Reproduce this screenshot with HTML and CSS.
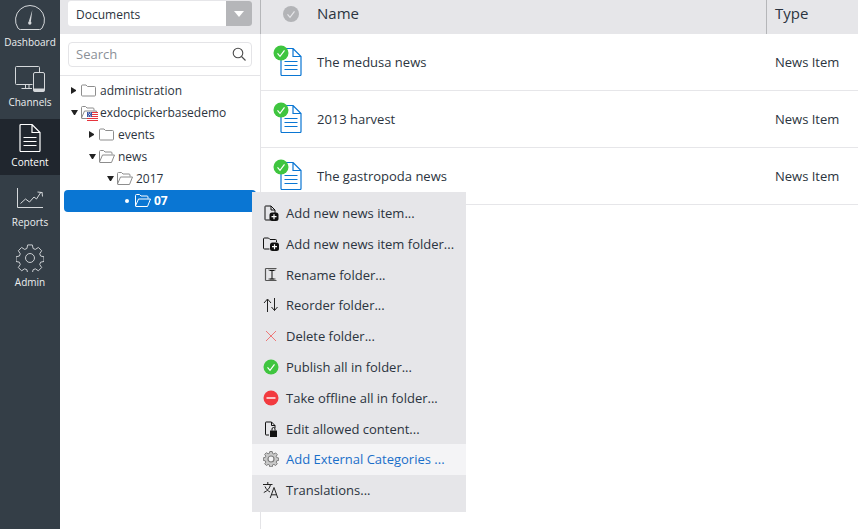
FILE: index.html
```html
<!DOCTYPE html>
<html>
<head>
<meta charset="UTF-8">
<title>Content</title>
<link rel="stylesheet" href="styles.css">
</head>
<body>
<svg class="defs" width="0" height="0">
  <symbol id="folder" viewBox="0 0 15 13"><path d="M.5 2a1 1 0 0 1 1-1h3.500l1.500 1.500h7a1 1 0 0 1 1 1v7.500a1 1 0 0 1-1 1h-12a1 1 0 0 1-1-1z" fill="none" stroke="currentColor"/></symbol>
  <symbol id="folder-open" viewBox="0 0 16 13"><path d="M.5 12V1.500a1 1 0 0 1 1-1h3l1.500 1.500h6a1 1 0 0 1 1 1v1.500M.5 12l3-7h12l-3 7.500H1a.5.500 0 0 1-.5-.5z" fill="none" stroke="currentColor"/></symbol>
  <symbol id="doc" viewBox="0 0 22 28"><path d="M1 1.500a1 1 0 0 1 1-1h11l8 8v18a1 1 0 0 1-1 1H2a1 1 0 0 1-1-1zM13 .5v8h8M4.500 13.500h13M4.500 17.500h13M4.500 21.500h13" fill="none" stroke="#0a76d3" stroke-width="1.200"/></symbol>
  <symbol id="check" viewBox="0 0 16 16"><circle cx="8" cy="8" r="7.500" fill="#3fc53f"/><path d="M4.500 8.300l2.500 3 4.500-6" fill="none" stroke="#fff" stroke-width="1.200"/></symbol>
</svg>
<div class="app">
  <nav class="sidebar">
    <a class="nav-item">
      <span class="nav-icon"><svg width="30" height="32" viewBox="0 0 30 32"><path d="M5.500 26.500h19a3 3 0 0 0 2.600-1.500 14.500 14.500 0 1 0-24.200 0 3 3 0 0 0 2.600 1.500z" fill="none" stroke="#d5d8db"/><path d="M13.800 18.500L17.300 7l-1.500 12z" fill="#d5d8db"/><circle cx="14.800" cy="20" r="1.700" fill="#d5d8db"/></svg></span>
      <span>Dashboard</span>
    </a>
    <a class="nav-item">
      <span class="nav-icon"><svg width="30" height="28" viewBox="0 -2 30 28"><path d="M17.500 18.500H1.500a1 1 0 0 1-1-1v-16a1 1 0 0 1 1-1h22a1 1 0 0 1 1 1v5M10.500 18.500v4M14 18.500v4M6.500 22.500H17" fill="none" stroke="#d5d8db"/><rect x="18.500" y="6.500" width="11" height="19" rx="1.500" fill="#343e47" stroke="#d5d8db"/><rect x="18.500" y="22.500" width="11" height="3" fill="#d5d8db"/></svg></span>
      <span>Channels</span>
    </a>
    <a class="nav-item active">
      <span class="nav-icon"><svg width="22" height="28" viewBox="0 0 22 28"><path d="M1 1.500a1 1 0 0 1 1-1h11l8 8v18a1 1 0 0 1-1 1H2a1 1 0 0 1-1-1zM13 .5v8h8M4.500 13.500h13M4.500 17.500h13M4.500 21.500h13" fill="none" stroke="#fff" stroke-width="1.200"/></svg></span>
      <span>Content</span>
    </a>
    <a class="nav-item">
      <span class="nav-icon"><svg width="26" height="20" viewBox="0 0 26 20"><path d="M.5 0v19.500H26M3.500 15.500l5-4.500 4 3 4.500-5 2.500 2 4.500-7M25 4.500l-4.500-.5M25 4l.5 4.500" fill="none" stroke="#d5d8db"/></svg></span>
      <span>Reports</span>
    </a>
    <a class="nav-item">
      <span class="nav-icon"><svg width="28" height="28" viewBox="0 0 30 30"><path d="M12.500 1h5l.8 3.800 2.400 1 3.300-2.100 3.500 3.500-2.100 3.300 1 2.400 3.600.8v5l-3.600.8-1 2.400 2.100 3.300-3.500 3.500-3.300-2.100-2.400 1-.8 3.600h-5l-.8-3.600-2.400-1-3.300 2.100-3.500-3.500 2.100-3.300-1-2.400-3.600-.8v-5l3.600-.8 1-2.400-2.100-3.300 3.500-3.500 3.300 2.100 2.400-1z" fill="none" stroke="#d5d8db"/><circle cx="15" cy="15" r="4.800" fill="none" stroke="#d5d8db"/></svg></span>
      <span>Admin</span>
    </a>
  </nav>

  <aside class="panel">
    <div class="panel-top">
      <div class="select">
        <span class="select-label">Documents</span>
        <span class="select-arrow"></span>
      </div>
    </div>
    <div class="search-wrap">
      <div class="search">
        <span>Search</span>
        <svg width="14" height="14" viewBox="0 0 14 14"><circle cx="6" cy="6" r="4.800" fill="none" stroke="#4a4a4a" stroke-width="1.100"/><path d="M9.500 9.500l4 4" stroke="#4a4a4a" stroke-width="1.100"/></svg>
      </div>
    </div>
    <ul class="tree">
      <li class="level-0"><i class="arrow right"></i><svg class="folder"><use href="#folder"/></svg><span>administration</span></li>
      <li class="level-0"><i class="arrow down"></i><span class="flagged"><svg class="folder-o"><use href="#folder-open"/></svg>
        <svg class="flag" width="11" height="9" viewBox="0 0 11 9"><rect width="11" height="9" fill="#fff"/><path d="M0 .5h11M0 2.500h11M0 4.500h11M0 6.500h11M0 8.500h11" stroke="#e6343c"/><rect width="5" height="5" fill="#3d5aa8"/><path d="M1 1h1M3 1h1M2 2.500h1M1 4h1M3 4h1" stroke="#fff" stroke-width=".8"/></svg></span><span>exdocpickerbasedemo</span></li>
      <li class="level-1"><i class="arrow right"></i><svg class="folder"><use href="#folder"/></svg><span>events</span></li>
      <li class="level-1"><i class="arrow down"></i><svg class="folder-o"><use href="#folder-open"/></svg><span>news</span></li>
      <li class="level-2"><i class="arrow down"></i><svg class="folder-o"><use href="#folder-open"/></svg><span>2017</span></li>
      <li class="level-3 selected"><i class="dot"></i><svg class="folder-o"><use href="#folder-open"/></svg><span>07</span></li>
    </ul>
  </aside>

  <main class="content">
    <div class="list-head">
      <div class="col-check"><svg width="16" height="16" viewBox="0 0 16 16"><circle cx="8" cy="8" r="8" fill="#b3b4b7"/><path d="M4.500 8.300l2.500 3 4.500-6" fill="none" stroke="#e6e6e9" stroke-width="1.200"/></svg></div>
      <div class="col-name">Name</div>
      <div class="col-type">Type</div>
    </div>
    <div class="row">
      <div class="col-check"><span class="doc-icon"><svg class="doc" width="22" height="28"><use href="#doc"/></svg><svg class="pub" width="16" height="16"><use href="#check"/></svg></span></div>
      <div class="col-name">The medusa news</div>
      <div class="col-type">News Item</div>
    </div>
    <div class="row">
      <div class="col-check"><span class="doc-icon"><svg class="doc" width="22" height="28"><use href="#doc"/></svg><svg class="pub" width="16" height="16"><use href="#check"/></svg></span></div>
      <div class="col-name">2013 harvest</div>
      <div class="col-type">News Item</div>
    </div>
    <div class="row">
      <div class="col-check"><span class="doc-icon"><svg class="doc" width="22" height="28"><use href="#doc"/></svg><svg class="pub" width="16" height="16"><use href="#check"/></svg></span></div>
      <div class="col-name">The gastropoda news</div>
      <div class="col-type">News Item</div>
    </div>
  </main>

  <ul class="menu">
    <li><svg width="16" height="16" viewBox="0 0 16 16"><path d="M7 15H2.500a.5.500 0 0 1-.5-.5v-13a.5.500 0 0 1 .5-.5H8l4 4v3M8 1v4h4" fill="none" stroke="#111"/><rect x="6.500" y="7.500" width="9" height="8.500" rx="2.500" fill="#111"/><path d="M8.500 11.700h5M11 9.200v5" stroke="#fff" stroke-width="1.200"/></svg>Add new news item...</li>
    <li><svg width="16" height="16" viewBox="0 0 16 16"><path d="M6 13H1a1 1 0 0 1-1-1V3a1 1 0 0 1 1-1h4l1.500 1.500H12a1 1 0 0 1 1 1V6" fill="none" stroke="#111" transform="translate(.5)"/><rect x="7" y="6.500" width="9" height="8.500" rx="2.500" fill="#111"/><path d="M9 10.700h5M11.500 8.200v5" stroke="#fff" stroke-width="1.200"/></svg>Add new news item folder...</li>
    <li><svg width="16" height="16" viewBox="0 0 16 16"><path d="M2.500 1.500h11M2.500 13.500h11M2.500 1.500v12" fill="none" stroke="#555" stroke-width="1.200"/><path d="M5 3h8M5 12h8" stroke="#999"/><path d="M6.500 3.500h5M6.500 12h5M9 3.500V12" fill="none" stroke="#111"/></svg>Rename folder...</li>
    <li><svg width="16" height="16" viewBox="0 0 16 16"><path d="M4.500 15V2.500M1 6l3.500-4L8 6M11.500 1v12.500M8.500 10l3 3.500 3-3.500" fill="none" stroke="#222"/></svg>Reorder folder...</li>
    <li><svg width="16" height="16" viewBox="0 0 16 16"><path d="M3 3l10 10M13 3L3 13" stroke="#e77" stroke-width="1"/></svg>Delete folder...</li>
    <li><svg width="16" height="16" viewBox="0 0 16 16"><use href="#check"/></svg>Publish all in folder...</li>
    <li><svg width="16" height="16" viewBox="0 0 16 16"><circle cx="8" cy="8" r="7.500" fill="#f23a3f"/><path d="M3.500 8h9" stroke="#fff" stroke-width="1.400"/></svg>Take offline all in folder...</li>
    <li><svg width="16" height="16" viewBox="0 0 16 16"><path d="M6 14H3a.5.500 0 0 1-.5-.5v-12A.5.500 0 0 1 3 1h5.500l3.500 3.500V7M8.500 1v3.500H12" fill="none" stroke="#111"/><rect x="7" y="9.500" width="7" height="6.500" fill="#111"/><path d="M9 9.500V8a1.500 1.500 0 0 1 3 0v1.500" fill="none" stroke="#111"/></svg>Edit allowed content...</li>
    <li class="hover"><svg width="16" height="16" viewBox="0 0 16 16"><path d="M6.800.5h2.400l.4 2 1.300.5 1.700-1.100 1.700 1.700-1.100 1.700.5 1.300 2 .4v2.400l-2 .4-.5 1.300 1.100 1.700-1.700 1.700-1.700-1.100-1.300.5-.4 2H6.800l-.4-2-1.300-.5-1.700 1.100-1.700-1.700 1.100-1.700-.5-1.300-2-.4V6.800l2-.4.500-1.300-1.100-1.700 1.700-1.700 1.700 1.100 1.300-.5z" fill="#c9c9c9" stroke="#7d7d7d"/><circle cx="8" cy="8" r="3" fill="#f4f4f6" stroke="#7d7d7d" stroke-width="1.200"/></svg>Add External Categories ...</li>
    <li><svg width="16" height="16" viewBox="0 0 16 16"><path d="M0 2.500h9.500M4.800 0v2.500M7.500 2.500C7 6 4.500 9 .8 10.500M2 4.500c1 2.500 3 4.500 5 5.500M7.200 16l3.800-10.500L14.800 16M8.500 12.800h5" fill="none" stroke="#222"/></svg>Translations...</li>
  </ul>
</div>
</body>
</html>
```

FILE: styles.css
```css
* {
    box-sizing: border-box;
}
html, body {
    margin: 0;
    padding: 0;
    height: 100%;
    overflow: hidden;
}
body {
    font-family: "Open Sans", sans-serif;
    font-size: 13px;
    color: #2b3440;
    background-color: #fff;
}
ul {
    list-style: none;
    margin: 0;
    padding: 0;
}
.defs {
    position: absolute;
}
.app {
    display: flex;
    height: 529px;
    position: relative;
}

/* left nav */
.sidebar {
    width: 60px;
    flex-shrink: 0;
    background-color: #343e47;
    display: flex;
    flex-direction: column;
    gap: 4px;
}
.nav-item {
    height: 56px;
    display: flex;
    flex-direction: column;
    align-items: center;
    justify-content: flex-end;
    padding-bottom: 6px;
    color: #eceef0;
    font-size: 10px;
    font-weight: 500;
    line-height: 14px;
}
.nav-item:first-child {
    height: 55px;
}
.nav-icon {
    height: 38px;
    margin-bottom: -2px;
    display: flex;
    align-items: center;
}
.nav-item.active {
    background-color: #20262e;
    color: #fff;
}

/* folder panel */
.panel {
    width: 201px;
    flex-shrink: 0;
    border-right: 1px solid #e4e4e7;
}
.panel-top {
    height: 34px;
    margin-right: -1px;
    background-color: #e6e6e9;
    border-right: 1px solid #b5b6b9;
    padding: 1px 8px 0;
}
.select {
    height: 25px;
    background-color: #fff;
    border-radius: 3px;
    display: flex;
    justify-content: space-between;
    align-items: center;
    padding-left: 8px;
    overflow: hidden;
    font-size: 12px;
}
.select-label {
    padding-top: 2px;
}
.select-arrow {
    width: 26px;
    height: 25px;
    background-color: #b5b6b9;
    position: relative;
}
.select-arrow::after {
    content: "";
    position: absolute;
    left: 8px;
    top: 10px;
    border-left: 5.500px solid transparent;
    border-right: 5.500px solid transparent;
    border-top: 6px solid #fff;
}
.search-wrap {
    height: 42px;
    padding: 8px 8px 0;
    border-bottom: 1px solid #e4e4e7;
}
.search {
    height: 25px;
    border: 1px solid #e4e4e7;
    border-radius: 4px;
    display: flex;
    justify-content: space-between;
    align-items: center;
    padding: 0 5px 2px 7px;
    color: #8b9097;
}

/* tree */
.tree {
    padding-top: 4px;
    font-size: 12px;
}
.tree li {
    height: 22px;
    display: flex;
    align-items: center;
    padding-bottom: 1px;
}
.level-0 {
    padding-left: 11px;
}
.level-1 {
    padding-left: 29px;
}
.level-2 {
    padding-left: 47px;
}
.level-3 {
    padding-left: 65px;
}
.arrow {
    width: 5px;
    height: 7px;
    margin-right: 5px;
}
.arrow.right {
    border-left: 5px solid #222;
    border-top: 3.500px solid transparent;
    border-bottom: 3.500px solid transparent;
}
.arrow.down {
    width: 7px;
    height: 5px;
    margin: 0 3px 0 0;
    border-top: 5px solid #222;
    border-left: 3.500px solid transparent;
    border-right: 3.500px solid transparent;
}
.folder {
    width: 15px;
    height: 13px;
    color: #8d8d8d;
    margin-right: 4px;
    flex-shrink: 0;
}
.folder-o {
    width: 16px;
    height: 13px;
    color: #8d8d8d;
    margin-right: 3px;
    flex-shrink: 0;
}
.flagged {
    position: relative;
    display: flex;
}
.flag {
    position: absolute;
    left: 6px;
    top: 6px;
}
.tree .selected {
    width: 192px;
    margin-left: 4px;
    padding-left: 61px;
    background-color: #0a76d3;
    border-radius: 4px;
    color: #fff;
    font-weight: 700;
}
.selected .folder-o {
    color: #fff;
}
.dot {
    width: 4px;
    height: 4px;
    border-radius: 50%;
    background-color: #fff;
    margin-right: 6px;
}

/* list */
.content {
    flex: 1;
}
.list-head {
    height: 34px;
    background-color: #e6e6e9;
    display: flex;
    font-size: 15px;
}
.list-head > div {
    height: 28px;
    align-items: center;
}
.list-head .col-name {
    line-height: 26px;
}
.row {
    height: 57px;
    display: flex;
    align-items: center;
    border-bottom: 1px solid #e6e6e9;
}
.col-check {
    width: 56px;
    flex-shrink: 0;
    padding-left: 22px;
    display: flex;
}
.row .col-check {
    padding-left: 19px;
}
.col-name {
    flex: 1;
}
.col-type {
    width: 92px;
    padding-left: 9px;
    flex-shrink: 0;
}
.list-head .col-type {
    height: 34px;
    line-height: 26px;
    padding-left: 8px;
    border-left: 1px solid #b5b6b9;
}
.doc-icon {
    position: relative;
    width: 22px;
    height: 28px;
}
.doc {
    display: block;
}
.pub {
    position: absolute;
    left: -7px;
    top: -3px;
}

/* context menu */
.menu {
    position: absolute;
    left: 252px;
    top: 192px;
    width: 214px;
    height: 320px;
    padding-top: 5.600px;
    background-color: #e6e6e9;
}
.menu li {
    height: 30.800px;
    display: flex;
    align-items: center;
    gap: 7px;
    padding-left: 11px;
}
.menu li svg {
    flex-shrink: 0;
}
.menu .hover {
    background-color: #f4f4f6;
    color: #1a6fc9;
}
```
